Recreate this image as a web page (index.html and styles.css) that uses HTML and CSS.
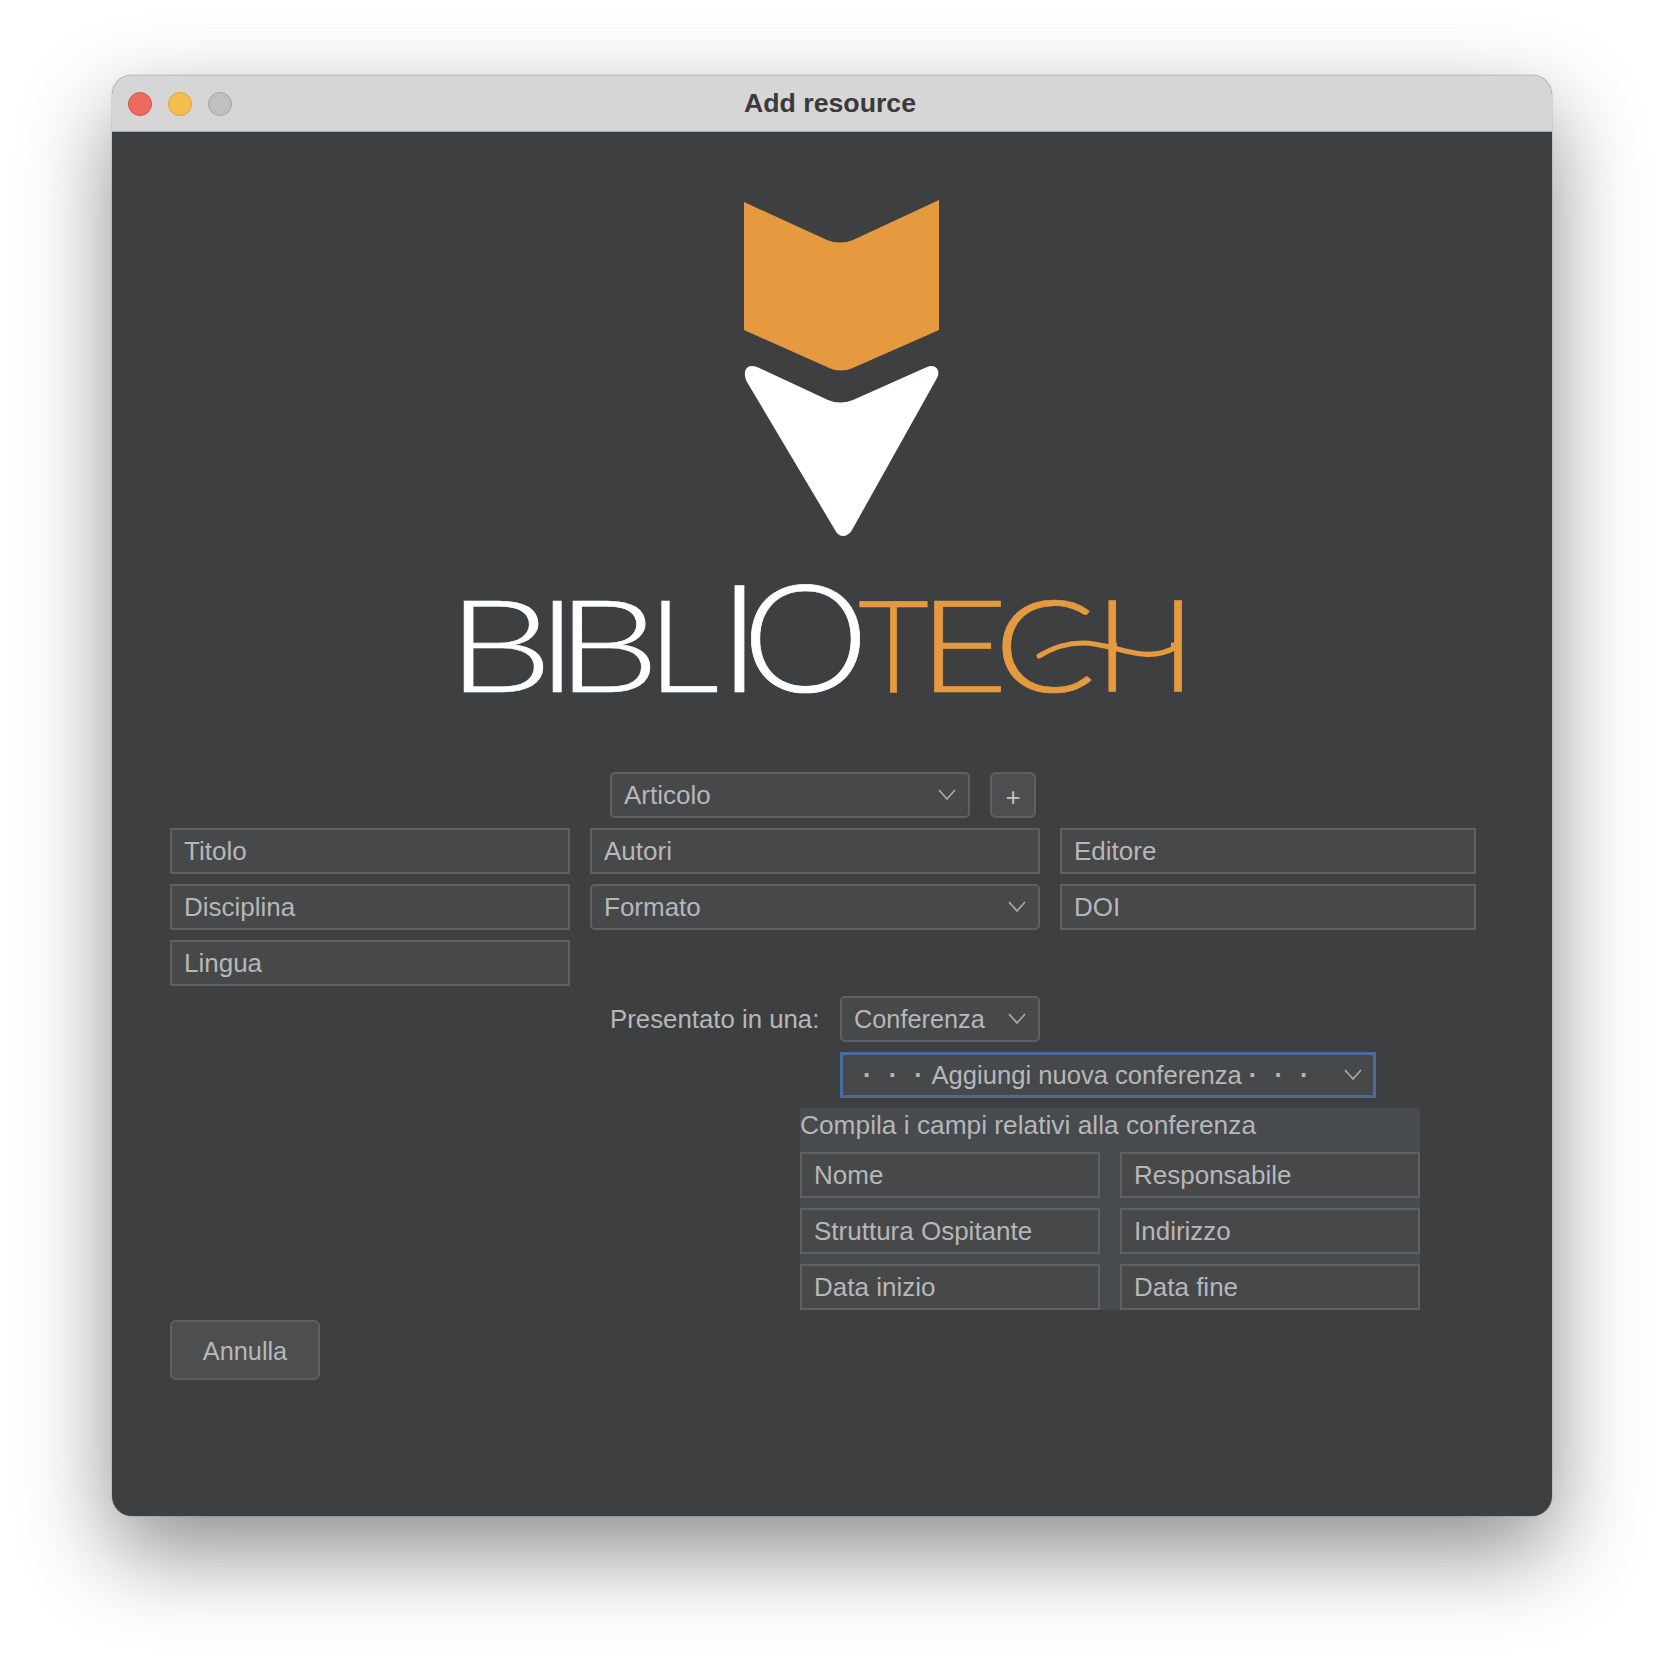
FILE: index.html

```html
<!DOCTYPE html>
<html lang="en">
<head>
    <meta charset="UTF-8">
    <title>Add resource</title>
    <link rel="stylesheet" href="styles.css">
</head>
<body>
    <div class="window">
        <div class="titlebar">
            <div class="lights">
                <span class="light red"></span>
                <span class="light yellow"></span>
                <span class="light grey"></span>
            </div>
            <div class="title">Add resource</div>
        </div>
        <div class="content">
            <svg class="logo" viewBox="440 190 760 520" width="760" height="520">
                <path class="orange" d="M744 202 L827 240 Q840 245 853 240 L939 200 L939 330 L855 367 Q840 374 827 367 L744 330 Z"/>
                <path class="white" d="M747 382 C742 372 746 363 757 367 L828 400 Q840 405 853 400 L927 367 C936 363 941 371 937 378 L852 530 C847 538 839 538 835 530 Z"/>
                <g class="mark white">
                    <text transform="translate(446.8 692) scale(1.3 1)">B</text>
                    <text transform="translate(537 692) scale(1.2 1)">I</text>
                    <text transform="translate(556 692) scale(1.27 1)">B</text>
                    <text transform="translate(647 692) scale(1.1 1)">L</text>
                    <text class="tall" transform="translate(717 692) scale(1.15 1)">I</text>
                    <text class="tall" transform="translate(742 692) scale(1.07 1)">O</text>
                </g>
                <g class="mark orange">
                    <text transform="translate(858 692) scale(0.95 1)">T</text>
                    <text transform="translate(918.6 692) scale(1.2 1)">E</text>
                    <text transform="translate(994 692) scale(1.17 1)">C</text>
                    <text transform="translate(1095 692) scale(1.03 1)">H</text>
                </g>
                <!-- the H has no straight bar in the logo, the swash replaces it -->
                <rect class="knock" x="1117" y="637" width="54" height="14"/>
                <path class="swash" d="M1039 656 C1052 648 1068 643 1083 643 C1100 643 1118 650 1135 653 C1150 656 1165 654 1178 646"/>
            </svg>

            <div class="form">
                <div class="type-row">
                    <div class="field select type-select">Articolo
                        <svg class="chevron" viewBox="0 0 18 11"><path d="M1 1 L9 10 L17 1"/></svg>
                    </div>
                    <div class="add-btn">+</div>
                </div>
                <div class="field">Titolo</div>
                <div class="field">Autori</div>
                <div class="field">Editore</div>
                <div class="field">Disciplina</div>
                <div class="field select">Formato
                    <svg class="chevron" viewBox="0 0 18 11"><path d="M1 1 L9 10 L17 1"/></svg>
                </div>
                <div class="field">DOI</div>
                <div class="field lingua">Lingua</div>
                <div class="presented">
                    <span class="presented-label">Presentato in una:</span>
                    <div class="field select conf-select">Conferenza
                        <svg class="chevron" viewBox="0 0 18 11"><path d="M1 1 L9 10 L17 1"/></svg>
                    </div>
                </div>
                <div class="field select focused">
                    <span class="dots">· · ·</span> Aggiungi nuova conferenza <span class="dots">· · ·</span>
                    <svg class="chevron" viewBox="0 0 18 11"><path d="M1 1 L9 10 L17 1"/></svg>
                </div>
                <div class="conf-panel">
                    <div class="conf-label">Compila i campi relativi alla conferenza</div>
                    <div class="field">Nome</div>
                    <div class="field">Responsabile</div>
                    <div class="field">Struttura Ospitante</div>
                    <div class="field">Indirizzo</div>
                    <div class="field">Data inizio</div>
                    <div class="field">Data fine</div>
                </div>
            </div>

            <div class="cancel-btn">Annulla</div>
        </div>
    </div>
</body>
</html>
```

FILE: styles.css

```css
body {
    margin: 0;
    height: 1664px;
    background: #fff;
    font-family: "Liberation Sans", Arial, sans-serif;
    display: flex;
    justify-content: center;
    align-items: flex-start;
    padding-top: 75px;
    box-sizing: border-box;
}
.window {
    width: 1440px;
    height: 1441px;
    border-radius: 20px;
    background: #3e3f41;
    box-shadow: 0 36px 90px rgba(0, 0, 0, 0.45), 0 0 0 1px rgba(0, 0, 0, 0.08);
    overflow: hidden;
}
.titlebar {
    height: 54px;
    background: #d6d6d6;
    border-top: 1px solid #c4c4c4;
    border-bottom: 1px solid #a8a8a8;
    display: grid;
    grid-template-columns: 1fr auto 1fr;
    align-items: center;
    padding: 1px 20px 0 16px;
}
.lights {
    display: flex;
    gap: 16px;
}
.light {
    width: 24px;
    height: 24px;
    border-radius: 50%;
    box-sizing: border-box;
    border: 1px solid;
}
.red { background: #ee6a5f; border-color: #d0564c; }
.yellow { background: #f5bf4f; border-color: #d6a243; }
.grey { background: #c0c0c0; border-color: #a5a5a5; }
.title {
    font-size: 26.7px;
    font-weight: bold;
    color: #3a3a3a;
    margin-bottom: 2px;
}

.content {
    height: 1384px;
    padding-left: 58px;
    box-sizing: border-box;
}
.logo {
    display: block;
    margin: 58px 0 62px 270px;
    height: 520px;
}
.logo .orange { fill: #e69a40; }
.logo .white { fill: #fff; }
.mark {
    font-family: Lato, sans-serif;
    font-weight: 300;
    font-size: 129px;
    stroke-width: 0.7;
}
.mark.white { stroke: #fff; }
.mark.orange { stroke: #e69a40; }
.mark .tall { font-size: 150px; }
.knock { fill: #3e3f41; }
.swash {
    fill: none;
    stroke: #e69a40;
    stroke-width: 5;
    stroke-linecap: round;
}

.form {
    display: grid;
    grid-template-columns: 400px 450px 416px;
    gap: 10px 20px;
}
.field {
    position: relative;
    box-sizing: border-box;
    height: 46px;
    background: #47484a;
    border: 2px solid #5f6062;
    color: #b6b7b8;
    font-size: 26px;
    line-height: 42px;
    padding-left: 12px;
    white-space: nowrap;
}
.select {
    border-radius: 5px;
}
.lingua {
    grid-column: 1 / 4;
    width: 400px;
}
.chevron {
    position: absolute;
    right: 12px;
    top: 15px;
    width: 18px;
    height: 11px;
    fill: none;
    stroke: #a9aaab;
    stroke-width: 1.6;
}
.type-row {
    grid-column: 2 / 4;
    display: flex;
    gap: 20px;
    padding-left: 20px;
}
.type-select {
    width: 360px;
}
.add-btn {
    width: 46px;
    height: 46px;
    box-sizing: border-box;
    background: #4d4e50;
    border: 2px solid #5f6062;
    border-radius: 6px;
    color: #c0c1c2;
    font-size: 26px;
    line-height: 46px;
    text-align: center;
}
.presented {
    grid-column: 2 / 4;
    display: flex;
    align-items: center;
    padding-left: 20px;
}
.presented-label {
    width: 230px;
    color: #b6b7b8;
    font-size: 25.8px;
}
.conf-select {
    width: 200px;
    font-size: 25.3px;
}
.focused {
    grid-column: 2 / 4;
    width: 536px;
    margin-left: 250px;
    border-radius: 0;
    border: 3px solid #4a6b9c;
    line-height: 40px;
    padding-left: 20px;
    font-size: 25.6px;
}
.focused .chevron {
    top: 14px;
    right: 11px;
}
.dots {
    font-weight: bold;
    word-spacing: 10px;
    margin-right: 3px;
}
.conf-panel {
    grid-column: 2 / 4;
    margin-left: 210px;
    width: 620px;
    display: grid;
    grid-template-columns: 300px 300px;
    grid-template-rows: 34px repeat(3, 46px);
    gap: 10px 20px;
    background: #474a4f;
}
.conf-label {
    grid-column: 1 / 3;
    color: #b6b7b8;
    font-size: 26.3px;
    line-height: 34px;
    white-space: nowrap;
}
.cancel-btn {
    width: 150px;
    height: 60px;
    box-sizing: border-box;
    margin-top: 10px;
    background: #4d4e50;
    border: 2px solid #5f6062;
    border-radius: 6px;
    color: #b6b7b8;
    font-size: 25.3px;
    line-height: 58px;
    text-align: center;
}
```
